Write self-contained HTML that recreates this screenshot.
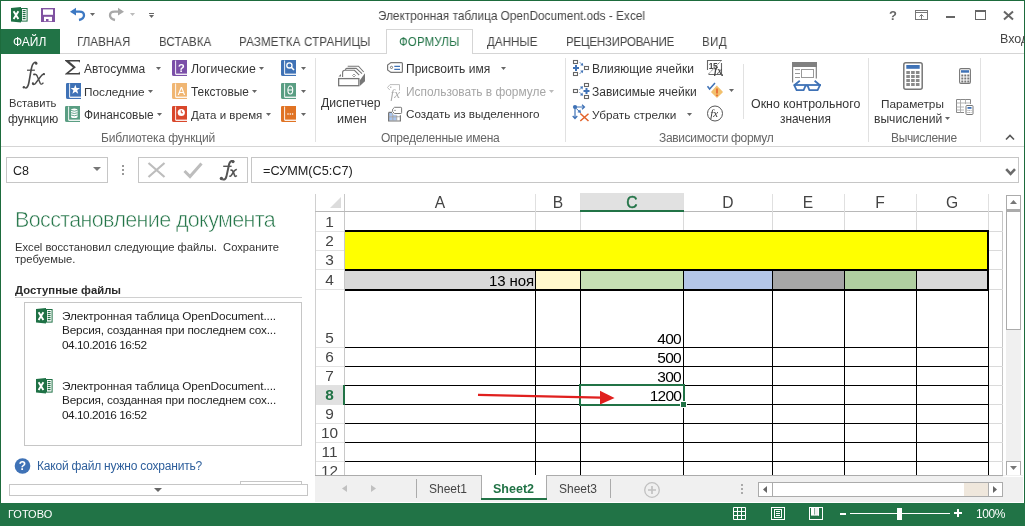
<!DOCTYPE html>
<html><head><meta charset="utf-8"><style>
html,body{margin:0;padding:0;}
body{width:1025px;height:526px;position:relative;overflow:hidden;background:#fff;font-family:"Liberation Sans",sans-serif;}
.t{position:absolute;white-space:nowrap;line-height:1;will-change:transform;}
.bm{display:inline-block;width:0;height:0;vertical-align:baseline;}
.r{position:absolute;box-sizing:border-box;}
svg.r{overflow:visible;will-change:transform}
</style></head><body>
<div class="r" style="left:0px;top:0px;width:1025px;height:1px;background:#1d6b3c"></div>
<div class="r" style="left:0px;top:0px;width:1px;height:526px;background:#1d6b3c"></div>
<div class="r" style="left:1024px;top:0px;width:1px;height:526px;background:#1d6b3c"></div>
<div class="t" id="k0" style="left:377.5px;top:9.40px;font-size:13px;color:#444;letter-spacing:0.05564741654829539px;transform:scaleX(0.9);transform-origin:0 0;"><span class="in">Электронная таблица OpenDocument.ods - Excel</span><i class="bm"></i></div>
<div class="t" id="k1" style="left:888.5px;top:8.71px;font-size:13px;color:#666;font-weight:700;"><span class="in">?</span><i class="bm"></i></div>
<div class="r" style="left:975px;top:10px;width:11px;height:10px;border:1px solid #666;border-top-width:2px"></div>
<div class="r" style="left:946px;top:16px;width:9px;height:2px;background:#666"></div>
<svg class="r" style="left:1003px;top:11px" width="11" height="9" viewBox="0 0 11 9"><path d="M1 0.5 L10 8.5 M10 0.5 L1 8.5" stroke="#666" stroke-width="2"/></svg>
<svg class="r" style="left:915px;top:10px" width="13" height="10" viewBox="0 0 13 10"><rect x="0.5" y="0.5" width="12" height="9" fill="none" stroke="#777"/><path d="M1 2.5 H12" stroke="#777"/><path d="M6.5 9 V4.5 M4.5 6.5 L6.5 4.5 L8.5 6.5" stroke="#777" fill="none"/></svg>
<div class="r" style="left:1px;top:29px;width:59px;height:25px;background:#217346"></div>
<div class="t" id="k2" style="left:13px;top:36.00px;font-size:12px;color:#fff;"><span class="in">ФАЙЛ</span><i class="bm"></i></div>
<div class="r" style="left:60px;top:53px;width:964px;height:1px;background:#d5d5d5"></div>
<div class="r" style="left:386px;top:29px;width:87px;height:25px;border:1px solid #d5d5d5;border-bottom:none;background:#fff"></div>
<div class="t" id="k3" style="left:76.5px;top:36.01px;font-size:12.8px;color:#444;letter-spacing:0.08928745814731798px;transform:scaleX(0.9);transform-origin:0 0;"><span class="in">ГЛАВНАЯ</span><i class="bm"></i></div>
<div class="t" id="k4" style="left:158.7px;top:36.01px;font-size:12.8px;color:#444;letter-spacing:0.11897452218191629px;transform:scaleX(0.9);transform-origin:0 0;"><span class="in">ВСТАВКА</span><i class="bm"></i></div>
<div class="t" id="k5" style="left:239.3px;top:36.01px;font-size:12.8px;color:#444;letter-spacing:0.21553129308363972px;transform:scaleX(0.9);transform-origin:0 0;"><span class="in">РАЗМЕТКА СТРАНИЦЫ</span><i class="bm"></i></div>
<div class="t" id="k6" style="left:399.2px;top:36.01px;font-size:12.8px;color:#217346;letter-spacing:0.13303222656249655px;transform:scaleX(0.9);transform-origin:0 0;"><span class="in">ФОРМУЛЫ</span><i class="bm"></i></div>
<div class="t" id="k7" style="left:486.9px;top:36.01px;font-size:12.8px;color:#444;letter-spacing:0.10989176432292092px;transform:scaleX(0.9);transform-origin:0 0;"><span class="in">ДАННЫЕ</span><i class="bm"></i></div>
<div class="t" id="k8" style="left:565.5px;top:36.01px;font-size:12.8px;color:#444;letter-spacing:-0.2202017647879464px;transform:scaleX(0.9);transform-origin:0 0;"><span class="in">РЕЦЕНЗИРОВАНИЕ</span><i class="bm"></i></div>
<div class="t" id="k9" style="left:702.4px;top:36.01px;font-size:12.8px;color:#444;letter-spacing:0.5682250976562538px;transform:scaleX(0.9);transform-origin:0 0;"><span class="in">ВИД</span><i class="bm"></i></div>
<div class="t" id="k10" style="left:999.7px;top:33.10px;font-size:12.5px;color:#444;"><span class="in">Вход</span><i class="bm"></i></div>
<div class="r" style="left:1px;top:146px;width:1023px;height:1px;background:#d5d5d5"></div>
<div class="r" style="left:315px;top:58px;width:1px;height:84px;background:#e1e1e1"></div>
<div class="r" style="left:565px;top:58px;width:1px;height:84px;background:#e1e1e1"></div>
<div class="r" style="left:868px;top:58px;width:1px;height:84px;background:#e1e1e1"></div>
<div class="r" style="left:980px;top:58px;width:1px;height:84px;background:#e1e1e1"></div>
<div class="r" style="left:743px;top:64px;width:1px;height:55px;background:#e1e1e1"></div>
<div class="t" id="k11" style="left:101px;top:131.50px;font-size:12px;color:#666;letter-spacing:-0.12708333333333052px;"><span class="in">Библиотека функций</span><i class="bm"></i></div>
<div class="t" id="k12" style="left:381px;top:131.50px;font-size:12px;color:#666;letter-spacing:-0.2326388888888889px;"><span class="in">Определенные имена</span><i class="bm"></i></div>
<div class="t" id="k13" style="left:659px;top:131.50px;font-size:12px;color:#666;letter-spacing:-0.3392361111111057px;"><span class="in">Зависимости формул</span><i class="bm"></i></div>
<div class="t" id="k14" style="left:891.2px;top:131.50px;font-size:12px;color:#666;letter-spacing:-0.3478125000000049px;"><span class="in">Вычисление</span><i class="bm"></i></div>
<div class="r" style="left:6px;top:157px;width:102px;height:26px;border:1px solid #c6c6c6"></div>
<div class="t" id="k15" style="left:13px;top:165.00px;font-size:12.5px;color:#222;"><span class="in">C8</span><i class="bm"></i></div>
<svg class="r" style="left:93px;top:167px" width="8" height="4" viewBox="0 0 8 4"><path d="M0 0 H8 L4 4 Z" fill="#777"/></svg>
<div class="r" style="left:122px;top:165px;width:2px;height:2px;background:#999"></div>
<div class="r" style="left:122px;top:169px;width:2px;height:2px;background:#999"></div>
<div class="r" style="left:122px;top:173px;width:2px;height:2px;background:#999"></div>
<div class="r" style="left:138px;top:157px;width:110px;height:26px;border:1px solid #c6c6c6"></div>
<div class="r" style="left:251px;top:157px;width:768px;height:26px;border:1px solid #c6c6c6"></div>
<div class="t" id="k16" style="left:263px;top:165.31px;font-size:12.7px;color:#222;"><span class="in">=СУММ(C5:C7)</span><i class="bm"></i></div>
<div class="t" id="k17" style="left:15px;top:209.81px;font-size:21.5px;color:#217346;letter-spacing:-0.63671875px;-webkit-text-stroke:0.55px #fff;"><span class="in">Восстановление документа</span><i class="bm"></i></div>
<div class="t" id="k18" style="left:15px;top:242.01px;font-size:11.2px;color:#333;"><span class="in">Excel восстановил следующие файлы.&nbsp; Сохраните</span><i class="bm"></i></div>
<div class="t" id="k19" style="left:15px;top:254.31px;font-size:11.2px;color:#333;"><span class="in">требуемые.</span><i class="bm"></i></div>
<div class="t" id="k20" style="left:15px;top:285.31px;font-size:11.3px;color:#2a2a2a;font-weight:700;"><span class="in">Доступные файлы</span><i class="bm"></i></div>
<div class="r" style="left:15px;top:297px;width:287px;height:1px;background:#d0d0d0"></div>
<div class="r" style="left:24px;top:302px;width:278px;height:144px;border:1px solid #c6c6c6"></div>
<div class="t" id="k21" style="left:62px;top:310.50px;font-size:11.8px;color:#1e1e1e;letter-spacing:-0.12413194444444445px;"><span class="in">Электронная таблица OpenDocument....</span><i class="bm"></i></div>
<div class="t" id="k22" style="left:62px;top:325.00px;font-size:11.8px;color:#1e1e1e;letter-spacing:-0.1875px;"><span class="in">Версия, созданная при последнем сох...</span><i class="bm"></i></div>
<div class="t" id="k23" style="left:62px;top:339.50px;font-size:11.8px;color:#1e1e1e;letter-spacing:-0.458984375px;"><span class="in">04.10.2016 16:52</span><i class="bm"></i></div>
<div class="t" id="k24" style="left:62px;top:380.50px;font-size:11.8px;color:#1e1e1e;letter-spacing:-0.12413194444444445px;"><span class="in">Электронная таблица OpenDocument....</span><i class="bm"></i></div>
<div class="t" id="k25" style="left:62px;top:395.00px;font-size:11.8px;color:#1e1e1e;letter-spacing:-0.1875px;"><span class="in">Версия, созданная при последнем сох...</span><i class="bm"></i></div>
<div class="t" id="k26" style="left:62px;top:409.50px;font-size:11.8px;color:#1e1e1e;letter-spacing:-0.458984375px;"><span class="in">04.10.2016 16:52</span><i class="bm"></i></div>
<div class="t" id="k27" style="left:37px;top:459.60px;font-size:12px;color:#2e5f9c;letter-spacing:-0.20543981481481483px;"><span class="in">Какой файл нужно сохранить?</span><i class="bm"></i></div>
<div class="r" style="left:240px;top:481px;width:62px;height:4px;border:1px solid #c6c6c6;border-bottom:none"></div>
<div class="r" style="left:9px;top:484px;width:299px;height:12px;border:1px solid #c6c6c6;background:#fff"></div>
<svg class="r" style="left:154px;top:488px" width="8" height="4" viewBox="0 0 8 4"><path d="M0 0 H8 L4 4 Z" fill="#666"/></svg>
<div class="r" style="left:0px;top:503px;width:1025px;height:23px;background:#217346"></div>
<div class="t" id="k28" style="left:8px;top:509.01px;font-size:11px;color:#fff;"><span class="in">ГОТОВО</span><i class="bm"></i></div>
<div class="t" id="k29" style="left:976px;top:508.20px;font-size:12px;color:#fff;letter-spacing:-0.42578125px;"><span class="in">100%</span><i class="bm"></i></div>
<div class="r" style="left:315px;top:194px;width:1px;height:281px;background:#d0d0d0"></div>
<div class="r" style="left:344px;top:194px;width:1px;height:281px;background:#c8c8c8"></div>
<div class="r" style="left:315px;top:211px;width:688px;height:1px;background:#b8b8b8"></div>
<div class="r" style="left:1002px;top:211px;width:1px;height:264px;background:#c6c6c6"></div>
<svg class="r" style="left:330px;top:197px" width="11" height="11" viewBox="0 0 11 11"><path d="M11 0 V11 H0 Z" fill="#dcdcdc"/></svg>
<div class="r" style="left:580px;top:193px;width:104px;height:17px;background:#e1e1e1"></div>
<div class="r" style="left:535px;top:194px;width:1px;height:17px;background:#e0e0e0"></div>
<div class="r" style="left:580px;top:194px;width:1px;height:17px;background:#e0e0e0"></div>
<div class="r" style="left:683px;top:194px;width:1px;height:17px;background:#e0e0e0"></div>
<div class="r" style="left:772px;top:194px;width:1px;height:17px;background:#e0e0e0"></div>
<div class="r" style="left:844px;top:194px;width:1px;height:17px;background:#e0e0e0"></div>
<div class="r" style="left:916px;top:194px;width:1px;height:17px;background:#e0e0e0"></div>
<div class="r" style="left:988px;top:194px;width:1px;height:17px;background:#e0e0e0"></div>
<div class="t" id="k30" style="left:419.5px;top:195.31px;font-size:15.6px;color:#444;width:40px;text-align:center;"><span class="in">A</span><i class="bm"></i></div>
<div class="t" id="k31" style="left:537.5px;top:195.31px;font-size:15.6px;color:#444;width:40px;text-align:center;"><span class="in">B</span><i class="bm"></i></div>
<div class="t" id="k32" style="left:611.5px;top:195.31px;font-size:15.6px;color:#217346;width:40px;text-align:center;-webkit-text-stroke:0.45px #217346;"><span class="in">C</span><i class="bm"></i></div>
<div class="t" id="k33" style="left:707.5px;top:195.31px;font-size:15.6px;color:#444;width:40px;text-align:center;"><span class="in">D</span><i class="bm"></i></div>
<div class="t" id="k34" style="left:788.0px;top:195.31px;font-size:15.6px;color:#444;width:40px;text-align:center;"><span class="in">E</span><i class="bm"></i></div>
<div class="t" id="k35" style="left:860.0px;top:195.31px;font-size:15.6px;color:#444;width:40px;text-align:center;"><span class="in">F</span><i class="bm"></i></div>
<div class="t" id="k36" style="left:932.0px;top:195.31px;font-size:15.6px;color:#444;width:40px;text-align:center;"><span class="in">G</span><i class="bm"></i></div>
<div class="r" style="left:535px;top:211px;width:1px;height:264px;background:#dadada"></div>
<div class="r" style="left:580px;top:211px;width:1px;height:264px;background:#dadada"></div>
<div class="r" style="left:683px;top:211px;width:1px;height:264px;background:#dadada"></div>
<div class="r" style="left:772px;top:211px;width:1px;height:264px;background:#dadada"></div>
<div class="r" style="left:844px;top:211px;width:1px;height:264px;background:#dadada"></div>
<div class="r" style="left:916px;top:211px;width:1px;height:264px;background:#dadada"></div>
<div class="r" style="left:988px;top:211px;width:1px;height:264px;background:#dadada"></div>
<div class="r" style="left:316px;top:231px;width:28px;height:1px;background:#e2e2e2"></div>
<div class="r" style="left:345px;top:231px;width:658px;height:1px;background:#dadada"></div>
<div class="r" style="left:316px;top:250px;width:28px;height:1px;background:#e2e2e2"></div>
<div class="r" style="left:345px;top:250px;width:658px;height:1px;background:#dadada"></div>
<div class="r" style="left:316px;top:269px;width:28px;height:1px;background:#e2e2e2"></div>
<div class="r" style="left:345px;top:269px;width:658px;height:1px;background:#dadada"></div>
<div class="r" style="left:316px;top:289px;width:28px;height:1px;background:#e2e2e2"></div>
<div class="r" style="left:345px;top:289px;width:658px;height:1px;background:#dadada"></div>
<div class="r" style="left:316px;top:347px;width:28px;height:1px;background:#e2e2e2"></div>
<div class="r" style="left:345px;top:347px;width:658px;height:1px;background:#dadada"></div>
<div class="r" style="left:316px;top:366px;width:28px;height:1px;background:#e2e2e2"></div>
<div class="r" style="left:345px;top:366px;width:658px;height:1px;background:#dadada"></div>
<div class="r" style="left:316px;top:385px;width:28px;height:1px;background:#e2e2e2"></div>
<div class="r" style="left:345px;top:385px;width:658px;height:1px;background:#dadada"></div>
<div class="r" style="left:316px;top:404px;width:28px;height:1px;background:#e2e2e2"></div>
<div class="r" style="left:345px;top:404px;width:658px;height:1px;background:#dadada"></div>
<div class="r" style="left:316px;top:423px;width:28px;height:1px;background:#e2e2e2"></div>
<div class="r" style="left:345px;top:423px;width:658px;height:1px;background:#dadada"></div>
<div class="r" style="left:316px;top:442px;width:28px;height:1px;background:#e2e2e2"></div>
<div class="r" style="left:345px;top:442px;width:658px;height:1px;background:#dadada"></div>
<div class="r" style="left:316px;top:461px;width:28px;height:1px;background:#e2e2e2"></div>
<div class="r" style="left:345px;top:461px;width:658px;height:1px;background:#dadada"></div>
<div class="r" style="left:316px;top:386px;width:27px;height:18px;background:#e1e1e1"></div>
<div class="t" id="k37" style="left:315px;top:213.60px;font-size:15.4px;color:#444;width:29px;text-align:center;"><span class="in">1</span><i class="bm"></i></div>
<div class="t" id="k38" style="left:315px;top:232.60px;font-size:15.4px;color:#444;width:29px;text-align:center;"><span class="in">2</span><i class="bm"></i></div>
<div class="t" id="k39" style="left:315px;top:251.60px;font-size:15.4px;color:#444;width:29px;text-align:center;"><span class="in">3</span><i class="bm"></i></div>
<div class="t" id="k40" style="left:315px;top:271.60px;font-size:15.4px;color:#444;width:29px;text-align:center;"><span class="in">4</span><i class="bm"></i></div>
<div class="t" id="k41" style="left:315px;top:329.60px;font-size:15.4px;color:#444;width:29px;text-align:center;"><span class="in">5</span><i class="bm"></i></div>
<div class="t" id="k42" style="left:315px;top:348.60px;font-size:15.4px;color:#444;width:29px;text-align:center;"><span class="in">6</span><i class="bm"></i></div>
<div class="t" id="k43" style="left:315px;top:367.60px;font-size:15.4px;color:#444;width:29px;text-align:center;"><span class="in">7</span><i class="bm"></i></div>
<div class="t" id="k44" style="left:315px;top:386.60px;font-size:15.4px;color:#217346;font-weight:700;width:29px;text-align:center;"><span class="in">8</span><i class="bm"></i></div>
<div class="t" id="k45" style="left:315px;top:405.60px;font-size:15.4px;color:#444;width:29px;text-align:center;"><span class="in">9</span><i class="bm"></i></div>
<div class="t" id="k46" style="left:315px;top:424.60px;font-size:15.4px;color:#444;width:29px;text-align:center;"><span class="in">10</span><i class="bm"></i></div>
<div class="t" id="k47" style="left:315px;top:443.60px;font-size:15.4px;color:#444;width:29px;text-align:center;"><span class="in">11</span><i class="bm"></i></div>
<div class="t" id="k48" style="left:315px;top:462.60px;font-size:15.4px;color:#444;width:29px;text-align:center;"><span class="in">12</span><i class="bm"></i></div>
<div class="r" style="left:345px;top:232px;width:643px;height:37px;background:#ffff00"></div>
<div class="r" style="left:345px;top:271px;width:190px;height:18px;background:#d9d9d9"></div>
<div class="r" style="left:536px;top:271px;width:44px;height:18px;background:#fff8cc"></div>
<div class="r" style="left:581px;top:271px;width:102px;height:18px;background:#c6e0b4"></div>
<div class="r" style="left:684px;top:271px;width:88px;height:18px;background:#b4c6e7"></div>
<div class="r" style="left:773px;top:271px;width:71px;height:18px;background:#a6a6a6"></div>
<div class="r" style="left:845px;top:271px;width:71px;height:18px;background:#b0cfa0"></div>
<div class="r" style="left:917px;top:271px;width:71px;height:18px;background:#d9d9d9"></div>
<div class="r" style="left:345px;top:230px;width:644px;height:2px;background:#000"></div>
<div class="r" style="left:345px;top:269px;width:644px;height:2px;background:#000"></div>
<div class="r" style="left:345px;top:289px;width:644px;height:2px;background:#000"></div>
<div class="r" style="left:987px;top:230px;width:2px;height:61px;background:#000"></div>
<div class="r" style="left:535px;top:271px;width:1px;height:18px;background:#000"></div>
<div class="r" style="left:580px;top:271px;width:1px;height:18px;background:#000"></div>
<div class="r" style="left:683px;top:271px;width:1px;height:18px;background:#000"></div>
<div class="r" style="left:772px;top:271px;width:1px;height:18px;background:#000"></div>
<div class="r" style="left:844px;top:271px;width:1px;height:18px;background:#000"></div>
<div class="r" style="left:916px;top:271px;width:1px;height:18px;background:#000"></div>
<div class="r" style="left:345px;top:347px;width:644px;height:1px;background:#000"></div>
<div class="r" style="left:345px;top:366px;width:644px;height:1px;background:#000"></div>
<div class="r" style="left:345px;top:385px;width:644px;height:1px;background:#000"></div>
<div class="r" style="left:345px;top:404px;width:644px;height:1px;background:#000"></div>
<div class="r" style="left:345px;top:423px;width:644px;height:1px;background:#000"></div>
<div class="r" style="left:345px;top:442px;width:644px;height:1px;background:#000"></div>
<div class="r" style="left:345px;top:461px;width:644px;height:1px;background:#000"></div>
<div class="r" style="left:535px;top:291px;width:1px;height:184px;background:#000"></div>
<div class="r" style="left:580px;top:291px;width:1px;height:184px;background:#000"></div>
<div class="r" style="left:683px;top:291px;width:1px;height:184px;background:#000"></div>
<div class="r" style="left:772px;top:291px;width:1px;height:184px;background:#000"></div>
<div class="r" style="left:844px;top:291px;width:1px;height:184px;background:#000"></div>
<div class="r" style="left:916px;top:291px;width:1px;height:184px;background:#000"></div>
<div class="r" style="left:988px;top:291px;width:1px;height:184px;background:#000"></div>
<div class="t" id="k49" style="left:640px;top:331.01px;font-size:15.5px;color:#000;letter-spacing:-0.6906249999999955px;width:41px;text-align:right;"><span class="in">400</span><i class="bm"></i></div>
<div class="t" id="k50" style="left:640px;top:350.01px;font-size:15.5px;color:#000;letter-spacing:-0.6906249999999955px;width:41px;text-align:right;"><span class="in">500</span><i class="bm"></i></div>
<div class="t" id="k51" style="left:640px;top:369.01px;font-size:15.5px;color:#000;letter-spacing:-0.6906249999999955px;width:41px;text-align:right;"><span class="in">300</span><i class="bm"></i></div>
<div class="t" id="k52" style="left:640px;top:388.01px;font-size:15.5px;color:#000;letter-spacing:-0.821875000000003px;width:41px;text-align:right;"><span class="in">1200</span><i class="bm"></i></div>
<div class="r" style="left:580px;top:210px;width:104px;height:2px;background:#217346"></div>
<div class="r" style="left:343px;top:385px;width:2px;height:20px;background:#217346"></div>
<div class="r" style="left:579px;top:384px;width:106px;height:22px;border:2px solid #217346"></div>
<div class="r" style="left:680px;top:401px;width:7px;height:7px;background:#217346;border:1px solid #fff"></div>
<svg class="r" style="left:470px;top:385px" width="150" height="25" viewBox="0 0 150 25"><path d="M8 9.9 L131 12.6" stroke="#e0201e" stroke-width="2.2"/><path d="M130 5.8 L144.6 12.9 L130 19.5 Z" fill="#e0201e"/></svg>
<div class="r" style="left:1003px;top:194px;width:21px;height:309px;background:#fff"></div>
<div class="r" style="left:1006px;top:211px;width:15px;height:290px;background:#f0f0f0"></div>
<div class="r" style="left:1006px;top:195px;width:15px;height:15px;border:1px solid #ababab;background:#fff"></div>
<svg class="r" style="left:1010px;top:200px" width="7" height="4" viewBox="0 0 7 4"><path d="M0 4 H7 L3.5 0 Z" fill="#777"/></svg>
<div class="r" style="left:1006px;top:210px;width:15px;height:120px;border:1px solid #ababab;background:#fff;border-top-width:2px"></div>
<div class="r" style="left:1006px;top:461px;width:15px;height:15px;border:1px solid #ababab;background:#fff"></div>
<svg class="r" style="left:1010px;top:466px" width="7" height="4" viewBox="0 0 7 4"><path d="M0 0 H7 L3.5 4 Z" fill="#777"/></svg>
<div class="r" style="left:315px;top:475px;width:708px;height:27px;background:#f0f0f0"></div>
<div class="r" style="left:315px;top:475px;width:688px;height:1px;background:#ababab"></div>
<div class="r" style="left:1003px;top:476px;width:20px;height:1px;background:#fff"></div>
<svg class="r" style="left:342px;top:485px" width="5" height="7" viewBox="0 0 5 7"><path d="M5 0 V7 L0 3.5 Z" fill="#c0c0c0"/></svg>
<svg class="r" style="left:371px;top:485px" width="5" height="7" viewBox="0 0 5 7"><path d="M0 0 V7 L5 3.5 Z" fill="#c0c0c0"/></svg>
<div class="r" style="left:416px;top:479px;width:1px;height:19px;background:#ababab"></div>
<div class="r" style="left:481px;top:475px;width:66px;height:25px;background:#fff;border:1px solid #ababab;border-top:none"></div>
<div class="r" style="left:481px;top:498px;width:66px;height:2px;background:#217346"></div>
<div class="t" id="k53" style="left:429.2px;top:482.81px;font-size:12px;color:#444;"><span class="in">Sheet1</span><i class="bm"></i></div>
<div class="t" id="k54" style="left:493.2px;top:482.50px;font-size:12.5px;color:#217346;font-weight:700;"><span class="in">Sheet2</span><i class="bm"></i></div>
<div class="t" id="k55" style="left:559px;top:482.81px;font-size:12px;color:#444;"><span class="in">Sheet3</span><i class="bm"></i></div>
<div class="r" style="left:610px;top:479px;width:1px;height:19px;background:#ababab"></div>
<svg class="r" style="left:644px;top:482px" width="16" height="16" viewBox="0 0 16 16"><circle cx="8" cy="8" r="7.3" fill="none" stroke="#c0c0c0" stroke-width="1.3"/><path d="M8 4 V12 M4 8 H12" stroke="#c0c0c0" stroke-width="1.6"/></svg>
<div class="r" style="left:741px;top:484px;width:2px;height:2px;background:#aaa"></div>
<div class="r" style="left:741px;top:488px;width:2px;height:2px;background:#aaa"></div>
<div class="r" style="left:741px;top:492px;width:2px;height:2px;background:#aaa"></div>
<div class="r" style="left:758px;top:482px;width:245px;height:15px;border:1px solid #ababab;background:#fff"></div>
<div class="r" style="left:964px;top:483px;width:24px;height:13px;background:#efe7dc"></div>
<div class="r" style="left:772px;top:483px;width:1px;height:13px;background:#ababab"></div>
<div class="r" style="left:988px;top:482px;width:15px;height:15px;border:1px solid #ababab;background:#fff"></div>
<svg class="r" style="left:763px;top:486px" width="4" height="7" viewBox="0 0 4 7"><path d="M4 0 V7 L0 3.5 Z" fill="#666"/></svg>
<svg class="r" style="left:993px;top:486px" width="4" height="7" viewBox="0 0 4 7"><path d="M0 0 V7 L4 3.5 Z" fill="#666"/></svg>
<div class="r" style="left:315px;top:502px;width:709px;height:1px;background:#fff"></div>
<svg class="r" style="left:18px;top:58px" width="32" height="34" viewBox="0 0 32 34"><path d="M18.6 5.2 Q18 3.9 16.6 4.4 Q14.2 5.3 13.2 11.5 L10.9 24.5 Q9.9 30.3 7.2 29.9" fill="none" stroke="#4a4a4a" stroke-width="1.6"/><circle cx="18.2" cy="5.6" r="1.25" fill="#4a4a4a"/><circle cx="5.9" cy="29.2" r="1.25" fill="#4a4a4a"/><path d="M9 12.2 H16.9" stroke="#4a4a4a" stroke-width="1.2"/><path d="M15.8 16.6 Q18.4 15.4 19.6 19 L22.2 25.2 Q23.3 27.4 25.4 24.6" fill="none" stroke="#4a4a4a" stroke-width="1.4"/><path d="M26.4 16.4 Q25.1 15.3 22.9 18.3 L17.6 25.2 Q15.8 27.3 14.6 25.8" fill="none" stroke="#4a4a4a" stroke-width="1.4"/><circle cx="16" cy="16.4" r="0.9" fill="#4a4a4a"/><circle cx="25.9" cy="16.2" r="1.1" fill="#4a4a4a"/><circle cx="14.9" cy="25.4" r="1.1" fill="#4a4a4a"/></svg>
<div class="t" id="k56" style="left:9.4px;top:98.01px;font-size:11.2px;color:#363636;"><span class="in">Вставить</span><i class="bm"></i></div>
<div class="t" id="k57" style="left:8px;top:113.00px;font-size:12px;color:#363636;"><span class="in">функцию</span><i class="bm"></i></div>
<svg class="r" style="left:64px;top:59px" width="17" height="17" viewBox="0 0 17 17"><path d="M1 1 H16 V3.9 Q15.7 2.6 14 2.6 H5.4 L11.9 8.3 L4.8 14 H14 Q15.7 14 16 12.6 V15.6 H1 V14.9 L8.9 8.5 L1 1.7 Z" fill="#444"/></svg>
<div class="t" id="k58" style="left:84.4px;top:62.70px;font-size:12px;color:#363636;"><span class="in">Автосумма</span><i class="bm"></i></div>
<svg class="r" style="left:155.7px;top:66.8px" width="5" height="3" viewBox="0 0 5 3"><path d="M0 0 H5 L2.5 3 Z" fill="#666"/></svg>
<svg class="r" style="left:66px;top:83px" width="15" height="16" viewBox="0 0 15 16"><path d="M1.2 0 H15 V14.2 H3.6 V15 H15 V16 H1.8 Q0 16 0 14.5 V1.2 Q0 0 1.2 0 Z" fill="#3f72b6"/><path d="M3.6 0.5 V14" stroke="#fff" stroke-width="0.9"/><path d="M3.6 14.1 H15" stroke="#fff" stroke-width="0.9"/><path d="M9.3 1.8 L10.5 5.1 L14 5.1 L11.2 7.3 L12.2 10.7 L9.3 8.7 L6.4 10.7 L7.4 7.3 L4.6 5.1 L8.1 5.1 Z" fill="#fff"/></svg>
<div class="t" id="k59" style="left:84.4px;top:86.60px;font-size:11.8px;color:#363636;"><span class="in">Последние</span><i class="bm"></i></div>
<svg class="r" style="left:148px;top:89.8px" width="5" height="3" viewBox="0 0 5 3"><path d="M0 0 H5 L2.5 3 Z" fill="#666"/></svg>
<svg class="r" style="left:65.2px;top:106px" width="15" height="16" viewBox="0 0 15 16"><path d="M1.2 0 H15 V14.2 H3.6 V15 H15 V16 H1.8 Q0 16 0 14.5 V1.2 Q0 0 1.2 0 Z" fill="#5a9e83"/><path d="M3.6 0.5 V14" stroke="#fff" stroke-width="0.9"/><path d="M3.6 14.1 H15" stroke="#fff" stroke-width="0.9"/><path d="M6 4.2 Q6 2.6 9.3 2.6 Q12.6 2.6 12.6 4.2 V10.4 Q12.6 12 9.3 12 Q6 12 6 10.4 Z" fill="#fff"/><path d="M6 4.4 Q9.3 6 12.6 4.4 M6 6.7 Q9.3 8.3 12.6 6.7 M6 9 Q9.3 10.6 12.6 9" fill="none" stroke="#5a9e83" stroke-width="0.9"/></svg>
<div class="t" id="k60" style="left:84.4px;top:109.61px;font-size:11.9px;color:#363636;"><span class="in">Финансовые</span><i class="bm"></i></div>
<svg class="r" style="left:157px;top:112.8px" width="5" height="3" viewBox="0 0 5 3"><path d="M0 0 H5 L2.5 3 Z" fill="#666"/></svg>
<svg class="r" style="left:172px;top:60px" width="15" height="16" viewBox="0 0 15 16"><path d="M1.2 0 H15 V14.2 H3.6 V15 H15 V16 H1.8 Q0 16 0 14.5 V1.2 Q0 0 1.2 0 Z" fill="#7b4fa8"/><path d="M3.6 0.5 V14" stroke="#fff" stroke-width="0.9"/><path d="M3.6 14.1 H15" stroke="#fff" stroke-width="0.9"/><text x="9.3" y="11.5" text-anchor="middle" font-family="Liberation Sans" font-weight="700" font-size="11" fill="#fff">?</text></svg>
<div class="t" id="k61" style="left:191.2px;top:62.71px;font-size:12.3px;color:#363636;"><span class="in">Логические</span><i class="bm"></i></div>
<svg class="r" style="left:259px;top:66.8px" width="5" height="3" viewBox="0 0 5 3"><path d="M0 0 H5 L2.5 3 Z" fill="#666"/></svg>
<svg class="r" style="left:172px;top:83px" width="15" height="16" viewBox="0 0 15 16"><path d="M1.2 0 H15 V14.2 H3.6 V15 H15 V16 H1.8 Q0 16 0 14.5 V1.2 Q0 0 1.2 0 Z" fill="#f0b673"/><path d="M3.6 0.5 V14" stroke="#fff" stroke-width="0.9"/><path d="M3.6 14.1 H15" stroke="#fff" stroke-width="0.9"/><text x="9.3" y="12" text-anchor="middle" font-family="Liberation Sans" font-size="11" fill="#fff">A</text></svg>
<div class="t" id="k62" style="left:191.2px;top:86.61px;font-size:11.9px;color:#363636;"><span class="in">Текстовые</span><i class="bm"></i></div>
<svg class="r" style="left:252.3px;top:89.8px" width="5" height="3" viewBox="0 0 5 3"><path d="M0 0 H5 L2.5 3 Z" fill="#666"/></svg>
<svg class="r" style="left:172px;top:106px" width="15" height="16" viewBox="0 0 15 16"><path d="M1.2 0 H15 V14.2 H3.6 V15 H15 V16 H1.8 Q0 16 0 14.5 V1.2 Q0 0 1.2 0 Z" fill="#d9472b"/><path d="M3.6 0.5 V14" stroke="#fff" stroke-width="0.9"/><path d="M3.6 14.1 H15" stroke="#fff" stroke-width="0.9"/><circle cx="9.3" cy="6.5" r="3.6" fill="#fff"/><path d="M9.3 4.3 V6.8 H11" stroke="#d9472b" stroke-width="1" fill="none"/></svg>
<div class="t" id="k63" style="left:191.2px;top:109.60px;font-size:11.5px;color:#363636;"><span class="in">Дата и время</span><i class="bm"></i></div>
<svg class="r" style="left:266px;top:112.8px" width="5" height="3" viewBox="0 0 5 3"><path d="M0 0 H5 L2.5 3 Z" fill="#666"/></svg>
<svg class="r" style="left:281px;top:60px" width="15" height="16" viewBox="0 0 15 16"><path d="M1.2 0 H15 V14.2 H3.6 V15 H15 V16 H1.8 Q0 16 0 14.5 V1.2 Q0 0 1.2 0 Z" fill="#3f72b6"/><path d="M3.6 0.5 V14" stroke="#fff" stroke-width="0.9"/><path d="M3.6 14.1 H15" stroke="#fff" stroke-width="0.9"/><circle cx="8.4" cy="5.4" r="2.6" fill="none" stroke="#fff" stroke-width="1.3"/><path d="M10.3 7.3 L13 10" stroke="#fff" stroke-width="1.6"/></svg>
<svg class="r" style="left:301px;top:66.8px" width="5" height="3" viewBox="0 0 5 3"><path d="M0 0 H5 L2.5 3 Z" fill="#666"/></svg>
<svg class="r" style="left:281px;top:83px" width="15" height="16" viewBox="0 0 15 16"><path d="M1.2 0 H15 V14.2 H3.6 V15 H15 V16 H1.8 Q0 16 0 14.5 V1.2 Q0 0 1.2 0 Z" fill="#5a9e83"/><path d="M3.6 0.5 V14" stroke="#fff" stroke-width="0.9"/><path d="M3.6 14.1 H15" stroke="#fff" stroke-width="0.9"/><ellipse cx="9.3" cy="7" rx="2.4" ry="4" fill="none" stroke="#fff" stroke-width="1.1"/><path d="M7 7 H11.6" stroke="#fff" stroke-width="1"/></svg>
<svg class="r" style="left:301px;top:89.8px" width="5" height="3" viewBox="0 0 5 3"><path d="M0 0 H5 L2.5 3 Z" fill="#666"/></svg>
<svg class="r" style="left:281px;top:106px" width="15" height="16" viewBox="0 0 15 16"><path d="M1.2 0 H15 V14.2 H3.6 V15 H15 V16 H1.8 Q0 16 0 14.5 V1.2 Q0 0 1.2 0 Z" fill="#e07324"/><path d="M3.6 0.5 V14" stroke="#fff" stroke-width="0.9"/><path d="M3.6 14.1 H15" stroke="#fff" stroke-width="0.9"/><circle cx="7" cy="8" r="0.8" fill="#fff"/><circle cx="9.3" cy="8" r="0.8" fill="#fff"/><circle cx="11.6" cy="8" r="0.8" fill="#fff"/></svg>
<svg class="r" style="left:301px;top:112.8px" width="5" height="3" viewBox="0 0 5 3"><path d="M0 0 H5 L2.5 3 Z" fill="#666"/></svg>
<svg class="r" style="left:337px;top:64px" width="29" height="23" viewBox="0 0 29 23"><path d="M10.7 2.2 H21.5 L26.7 8" fill="none" stroke="#777" stroke-width="1.1"/>
<path d="M8.6 6 V5.6 Q8.6 4.4 9.8 4.4 H19.2 L25 9.7" fill="none" stroke="#777" stroke-width="1.1"/>
<path d="M5.6 13 V8.6 Q5.6 6.3 7.9 6.3 H17.5 L22.2 11.2" fill="none" stroke="#777" stroke-width="1.1"/>
<path d="M17 10 L18.5 11.5 L17 13 L15.5 11.5 Z" fill="none" stroke="#888" stroke-width="0.8"/>
<path d="M1.5 12.6 L4 10 V12.6 Z" fill="#777"/>
<rect x="1.65" y="14.6" width="20.2" height="7.1" fill="#fff" stroke="#777" stroke-width="1.3"/>
<path d="M22.8 16.2 L28 9.2 V17.2 L22.8 22 Z" fill="#777"/></svg>
<div class="t" id="k64" style="left:321.4px;top:97.00px;font-size:12.2px;color:#363636;"><span class="in">Диспетчер</span><i class="bm"></i></div>
<div class="t" id="k65" style="left:336.6px;top:113.01px;font-size:12.6px;color:#363636;"><span class="in">имен</span><i class="bm"></i></div>
<svg class="r" style="left:387px;top:62px" width="16" height="11" viewBox="0 0 16 11"><path d="M4 0.6 H14.4 Q15.4 0.6 15.4 1.6 V9.4 Q15.4 10.4 14.4 10.4 H4 L0.6 8 V3 Z" fill="#fff" stroke="#777" stroke-width="1.2"/><circle cx="4.5" cy="5.4" r="1.1" fill="none" stroke="#777" stroke-width="1"/><path d="M7.3 4.4 H13 M7.3 7.4 H13" stroke="#3f72b6" stroke-width="1.2"/></svg>
<div class="t" id="k66" style="left:406.4px;top:63.31px;font-size:12px;color:#363636;"><span class="in">Присвоить имя</span><i class="bm"></i></div>
<svg class="r" style="left:500.8px;top:67.3px" width="5" height="3" viewBox="0 0 5 3"><path d="M0 0 H5 L2.5 3 Z" fill="#666"/></svg>
<svg class="r" style="left:387px;top:84px" width="17" height="16" viewBox="0 0 17 16"><path d="M12.5 6.5 V0.6 H3 L0.5 3.5 L2.8 6" fill="none" stroke="#bdbdbd" stroke-width="1"/><rect x="3" y="2.5" width="1.4" height="1.4" fill="#bbb"/><text x="3.6" y="13.6" font-family="Liberation Serif" font-style="italic" font-size="13" fill="#aaa">fx</text></svg>
<div class="t" id="k67" style="left:406.4px;top:87.01px;font-size:11.9px;color:#a6a6a6;"><span class="in">Использовать в формуле</span><i class="bm"></i></div>
<svg class="r" style="left:549px;top:90.3px" width="5" height="3" viewBox="0 0 5 3"><path d="M0 0 H5 L2.5 3 Z" fill="#bbb"/></svg>
<svg class="r" style="left:388px;top:106px" width="15" height="16" viewBox="0 0 15 16"><rect x="1" y="7" width="3.5" height="3.5" fill="#a9c4ec"/><rect x="1" y="11" width="3.5" height="3.5" fill="#a9c4ec"/><rect x="5" y="11" width="3.5" height="3.5" fill="#a9c4ec"/><rect x="5" y="8.8" width="3.5" height="1.7" fill="#a9c4ec"/><path d="M0.6 6.4 V15 H12.4 V9.3 M0.6 6.4 H4" fill="none" stroke="#777" stroke-width="1.2"/><path d="M4.75 7 V14.5 M8.75 9.5 V14.5 M1 10.75 H12" stroke="#999" stroke-width="0.8"/><path d="M6.5 1.3 H12.8 Q13.6 1.3 13.6 2.1 V6.7 Q13.6 7.5 12.8 7.5 H6.5 L4.6 5.6 V3.2 Z" fill="#fff" stroke="#777" stroke-width="1"/><circle cx="7" cy="4.4" r="0.7" fill="#777"/></svg>
<div class="t" id="k68" style="left:406.4px;top:108.41px;font-size:11.7px;color:#363636;"><span class="in">Создать из выделенного</span><i class="bm"></i></div>
<svg class="r" style="left:573px;top:60px" width="17" height="16" viewBox="0 0 17 16"><rect x="0.5" y="0.5" width="4" height="3" fill="#fff" stroke="#666" stroke-width="1.1"/><rect x="0.5" y="12.5" width="4" height="3" fill="#fff" stroke="#666" stroke-width="1.1"/><rect x="11.5" y="6.5" width="4" height="3" fill="#fff" stroke="#666" stroke-width="1.1"/><path d="M0 8 H6 M3 5 V11" stroke="#3f72b6" stroke-width="2"/><path d="M6.5 2 L8.46 3.96" stroke="#3f72b6" stroke-width="1" stroke-dasharray="1 0.7"/><path d="M10.3 5.8 L7.19 5.23 L9.73 2.69 Z" fill="#3f72b6"/><path d="M6.5 14 L8.46 12.04" stroke="#3f72b6" stroke-width="1" stroke-dasharray="1 0.7"/><path d="M10.3 10.2 L9.73 13.31 L7.19 10.77 Z" fill="#3f72b6"/></svg>
<div class="t" id="k69" style="left:592.4px;top:63.00px;font-size:12px;color:#363636;"><span class="in">Влияющие ячейки</span><i class="bm"></i></div>
<svg class="r" style="left:573px;top:83px" width="17" height="16" viewBox="0 0 17 16"><rect x="0.5" y="6.5" width="4" height="3" fill="#fff" stroke="#666" stroke-width="1.1"/><rect x="11.5" y="0.5" width="4" height="3" fill="#fff" stroke="#666" stroke-width="1.1"/><rect x="11.5" y="12.5" width="4" height="3" fill="#fff" stroke="#666" stroke-width="1.1"/><path d="M10.5 8 H16.5 M13.5 5 V11" stroke="#3f72b6" stroke-width="2"/><path d="M6.3 7 L8.16 5.14" stroke="#3f72b6" stroke-width="1" stroke-dasharray="1 0.7"/><path d="M10 3.3 L9.43 6.41 L6.89 3.87 Z" fill="#3f72b6"/><path d="M6.3 9 L8.16 10.86" stroke="#3f72b6" stroke-width="1" stroke-dasharray="1 0.7"/><path d="M10 12.7 L6.89 12.13 L9.43 9.59 Z" fill="#3f72b6"/></svg>
<div class="t" id="k70" style="left:592.4px;top:85.60px;font-size:12px;color:#363636;"><span class="in">Зависимые ячейки</span><i class="bm"></i></div>
<svg class="r" style="left:573px;top:105px" width="17" height="17" viewBox="0 0 17 17"><circle cx="2" cy="2" r="2.1" fill="#3f72b6"/><path d="M2 2 V13.5 M-0.3 11 L2 13.5 L4.3 11 M2 2 H11.5 M9 -0.3 L11.5 2 L9 4.3" stroke="#3f72b6" stroke-width="1.2" fill="none"/><path d="M3.2 3.5 L6.5 6.5" stroke="#3f72b6" stroke-width="1"/><path d="M8 8 L4.4 7.3 L7.3 4.4 Z" fill="#3f72b6"/><path d="M7.3 8.5 L15.5 16 M15.5 8.8 L7.3 16" stroke="#e2622a" stroke-width="1.5"/></svg>
<div class="t" id="k71" style="left:592.4px;top:109.50px;font-size:11.8px;color:#363636;"><span class="in">Убрать стрелки</span><i class="bm"></i></div>
<svg class="r" style="left:687px;top:112.8px" width="5" height="3" viewBox="0 0 5 3"><path d="M0 0 H5 L2.5 3 Z" fill="#666"/></svg>
<svg class="r" style="left:707px;top:60px" width="16" height="16" viewBox="0 0 16 16"><path d="M0.5 10 V0.5 H14.5 M14.5 3 V14.5 H1.5" fill="none" stroke="#666" stroke-width="1.1"/><path d="M1.5 14 L14.5 0.5" stroke="#666" stroke-width="1" stroke-dasharray="1.2 0.8"/><text x="1.8" y="8.6" font-family="Liberation Sans" font-weight="700" font-size="8.5" letter-spacing="-0.6" fill="#444">15</text><text x="7" y="14" font-family="Liberation Serif" font-style="italic" font-weight="700" font-size="9.5" fill="#444">fx</text><rect x="14.3" y="14.3" width="1.7" height="1.7" fill="#555"/></svg>
<svg class="r" style="left:707px;top:82px" width="18" height="17" viewBox="0 0 18 17"><path d="M10 3.8 L15.6 9.5 Q16.2 10 15.6 10.5 L10.5 15.6 Q10 16.2 9.5 15.6 L4.4 10.5 Q3.8 10 4.4 9.5 L9.5 3.8 Q10 3.2 10.5 3.8 Z" fill="#f2c06d"/><path d="M0.5 4.3 L2.6 7 L8 1" stroke="#3f72b6" stroke-width="1.5" fill="none"/><path d="M10 6.5 V11.5" stroke="#e8602a" stroke-width="1.6"/><rect x="9.2" y="12.6" width="1.6" height="1.6" fill="#e8602a"/></svg>
<svg class="r" style="left:729px;top:89.4px" width="5" height="3" viewBox="0 0 5 3"><path d="M0 0 H5 L2.5 3 Z" fill="#666"/></svg>
<svg class="r" style="left:707px;top:105px" width="17" height="17" viewBox="0 0 17 17"><circle cx="8" cy="8.5" r="7.5" fill="#fff" stroke="#555" stroke-width="1"/><text x="3.2" y="12.2" font-family="Liberation Serif" font-style="italic" font-size="11" fill="#333">fx</text></svg>
<svg class="r" style="left:792px;top:62px" width="30" height="30" viewBox="0 0 30 30"><rect x="0" y="0" width="25" height="5" fill="#808080"/>
<path d="M0.6 5 V20.5 M24.3 5 V16.5" stroke="#808080" stroke-width="1.2"/>
<path d="M3 7.6 H8 M3 11.5 H8 M3 15.5 H8" stroke="#999" stroke-width="1"/>
<rect x="9.5" y="7.5" width="12" height="8" fill="none" stroke="#999" stroke-width="1"/>
<path d="M7.8 18.8 L2.2 23.2 L4.6 28.2 H11.6 L13.6 23.6 H15.6 L17.4 28.2 H25.6 L28 23.2 L22.6 18.8" fill="none" stroke="#3f72b6" stroke-width="1.8" stroke-linejoin="round"/>
<path d="M1.8 23 H29" stroke="#3f72b6" stroke-width="1.8"/></svg>
<div class="t" id="k72" style="left:750.6px;top:97.81px;font-size:12.4px;color:#363636;"><span class="in">Окно контрольного</span><i class="bm"></i></div>
<div class="t" id="k73" style="left:779.5px;top:114.01px;font-size:11.9px;color:#363636;"><span class="in">значения</span><i class="bm"></i></div>
<svg class="r" style="left:903px;top:62px" width="20" height="28" viewBox="0 0 20 28"><rect x="0.8" y="0.8" width="18.4" height="26.4" rx="2" fill="#fff" stroke="#777" stroke-width="1.5"/><rect x="3.3" y="3" width="13.4" height="3.8" fill="#3f72b6"/><rect x="3.3" y="9" width="3.6" height="3" fill="#8a8a8a"/><rect x="8.1" y="9" width="3.6" height="3" fill="#8a8a8a"/><rect x="12.899999999999999" y="9" width="3.6" height="3" fill="#8a8a8a"/><rect x="3.3" y="13" width="3.6" height="3" fill="#8a8a8a"/><rect x="8.1" y="13" width="3.6" height="3" fill="#8a8a8a"/><rect x="12.899999999999999" y="13" width="3.6" height="3" fill="#8a8a8a"/><rect x="3.3" y="17" width="3.6" height="3" fill="#8a8a8a"/><rect x="8.1" y="17" width="3.6" height="3" fill="#8a8a8a"/><rect x="12.899999999999999" y="17" width="3.6" height="3" fill="#8a8a8a"/><rect x="3.3" y="21" width="3.6" height="3" fill="#8a8a8a"/><rect x="8.1" y="21" width="3.6" height="3" fill="#8a8a8a"/><rect x="12.899999999999999" y="21" width="3.6" height="3" fill="#8a8a8a"/></svg>
<div class="t" id="k74" style="left:881.3px;top:98.81px;font-size:11.8px;color:#363636;"><span class="in">Параметры</span><i class="bm"></i></div>
<div class="t" id="k75" style="left:874px;top:113.00px;font-size:12.1px;color:#363636;"><span class="in">вычислений</span><i class="bm"></i></div>
<svg class="r" style="left:944.5px;top:116.8px" width="5" height="3" viewBox="0 0 5 3"><path d="M0 0 H5 L2.5 3 Z" fill="#666"/></svg>
<svg class="r" style="left:959px;top:68px" width="12" height="16" viewBox="0 0 12 16"><rect x="0.6" y="0.6" width="10.8" height="14.8" rx="1.3" fill="#fff" stroke="#777" stroke-width="1.1"/><rect x="2" y="2.2" width="8" height="2.5" fill="#3f72b6"/><rect x="2.3" y="6.5" width="2" height="2" fill="#777"/><rect x="5.3" y="6.5" width="2" height="2" fill="#777"/><rect x="8.3" y="6.5" width="2" height="2" fill="#777"/><rect x="2.3" y="9.5" width="2" height="2" fill="#777"/><rect x="5.3" y="9.5" width="2" height="2" fill="#777"/><rect x="8.3" y="9.5" width="2" height="2" fill="#777"/><rect x="2.3" y="12.5" width="2" height="2" fill="#777"/><rect x="5.3" y="12.5" width="2" height="2" fill="#777"/><rect x="8.3" y="12.5" width="2" height="2" fill="#777"/></svg>
<svg class="r" style="left:956px;top:99px" width="18" height="16" viewBox="0 0 18 16"><path d="M0.5 0.5 H14.5 V5 M0.5 0.5 V13.5 H8" fill="none" stroke="#888" stroke-width="1"/><path d="M0.5 4 H14.5 M0.5 8 H8 M0.5 11 H8 M4.5 0.5 V13.5 M9.5 0.5 V5" stroke="#aaa" stroke-width="0.9"/><rect x="10" y="6.5" width="7" height="9" rx="0.8" fill="#fff" stroke="#777" stroke-width="1"/><rect x="11.5" y="8" width="4" height="1.8" fill="#3f72b6"/><path d="M11.5 11.5 H15.5 M11.5 13.5 H15.5" stroke="#888" stroke-width="0.9" stroke-dasharray="1 0.8"/></svg>
<svg class="r" style="left:1005px;top:134px" width="10" height="6" viewBox="0 0 10 6"><path d="M1 5.5 L5 1.5 L9 5.5" stroke="#555" stroke-width="1.6" fill="none"/></svg>
<svg class="r" style="left:11px;top:7px" width="17" height="16" viewBox="0 0 17 16"><rect x="10.5" y="1.5" width="5.6" height="12.6" fill="#fff" stroke="#1e7145" stroke-width="1"/><rect x="12" y="3" width="2.6" height="1.2" fill="#1e7145"/><rect x="10" y="3" width="1.3" height="1.2" fill="#1e7145"/><rect x="12" y="5" width="2.6" height="1.2" fill="#1e7145"/><rect x="10" y="5" width="1.3" height="1.2" fill="#1e7145"/><rect x="12" y="7" width="2.6" height="1.2" fill="#1e7145"/><rect x="10" y="7" width="1.3" height="1.2" fill="#1e7145"/><rect x="12" y="9" width="2.6" height="1.2" fill="#1e7145"/><rect x="10" y="9" width="1.3" height="1.2" fill="#1e7145"/><rect x="12" y="11" width="2.6" height="1.2" fill="#1e7145"/><rect x="10" y="11" width="1.3" height="1.2" fill="#1e7145"/><path d="M0 1 L10 0 V15.6 L0 14.6 Z" fill="#1e7145"/><path d="M2.6 4.2 L7.4 12 M7.4 4.2 L2.6 12" stroke="#fff" stroke-width="1.9"/></svg>
<svg class="r" style="left:41px;top:8px" width="14" height="14" viewBox="0 0 14 14"><rect x="0" y="0" width="14" height="14" fill="#8052a1"/><rect x="2" y="1.4" width="10" height="5.4" fill="#fff"/><rect x="3" y="8.8" width="8" height="4.4" fill="#fff"/><rect x="5" y="11" width="2.5" height="2.2" fill="#8052a1"/></svg>
<svg class="r" style="left:66px;top:4px" width="22" height="22" viewBox="0 0 22 22"><path d="M6.5 7.7 H13.5 Q18 7.7 18 11.3 Q18 15 13 16" fill="none" stroke="#3c78c3" stroke-width="2.3"/><path d="M4 7.7 L10 3.8 L10 11.6 Z" fill="#3c78c3"/></svg>
<svg class="r" style="left:90px;top:13.2px" width="5" height="3" viewBox="0 0 5 3"><path d="M0 0 H5 L2.5 3 Z" fill="#666"/></svg>
<svg class="r" style="left:106px;top:4px" width="22" height="22" viewBox="0 0 22 22"><path d="M15.5 7.7 H8.5 Q4 7.7 4 11.3 Q4 15 9 16" fill="none" stroke="#a8a8a8" stroke-width="2.3"/><path d="M18 7.7 L12 3.8 L12 11.6 Z" fill="#a8a8a8"/></svg>
<svg class="r" style="left:130px;top:13.2px" width="5" height="3" viewBox="0 0 5 3"><path d="M0 0 H5 L2.5 3 Z" fill="#bbb"/></svg>
<div class="r" style="left:149px;top:13px;width:5px;height:1px;background:#666"></div>
<svg class="r" style="left:149px;top:15px" width="5" height="3" viewBox="0 0 5 3"><path d="M0 0 H5 L2.5 3 Z" fill="#666"/></svg>
<svg class="r" style="left:147px;top:162px" width="19" height="16" viewBox="0 0 19 16"><path d="M1.5 1 L17.5 15 M17.5 1 L1.5 15" stroke="#bdbdbd" stroke-width="2.2"/></svg>
<svg class="r" style="left:183px;top:162px" width="20" height="16" viewBox="0 0 20 16"><path d="M1.5 9 L7 14.5 L18.5 1.5" stroke="#bdbdbd" stroke-width="3" fill="none"/></svg>
<svg class="r" style="left:214px;top:158px" width="28" height="26" viewBox="0 0 28 26"><path d="M19.6 4 Q19 2.6 17.5 3 Q15.4 3.7 14.6 8.5 L12.4 18.6 Q11.5 22.3 8.4 21.4" fill="none" stroke="#555" stroke-width="2"/><circle cx="19" cy="3.6" r="1.6" fill="#555"/><circle cx="7.4" cy="20.5" r="1.7" fill="#555"/><path d="M9.2 8.3 H17.6" stroke="#555" stroke-width="1.4"/><path d="M16.4 12.4 Q18.2 11.4 19.2 13.9 L20.7 17.6 Q21.4 19.1 22.8 17.5" fill="none" stroke="#555" stroke-width="1.6"/><path d="M22.8 11.7 Q21.8 11.2 20.2 13 L17.3 17.4 Q16.4 18.9 15.3 17.8" fill="none" stroke="#555" stroke-width="1.6"/></svg>
<svg class="r" style="left:36px;top:308px" width="17" height="16" viewBox="0 0 17 16"><rect x="10.5" y="1.5" width="5.6" height="12.6" fill="#fff" stroke="#1e7145" stroke-width="1"/><rect x="12" y="3" width="2.6" height="1.2" fill="#1e7145"/><rect x="10" y="3" width="1.3" height="1.2" fill="#1e7145"/><rect x="12" y="5" width="2.6" height="1.2" fill="#1e7145"/><rect x="10" y="5" width="1.3" height="1.2" fill="#1e7145"/><rect x="12" y="7" width="2.6" height="1.2" fill="#1e7145"/><rect x="10" y="7" width="1.3" height="1.2" fill="#1e7145"/><rect x="12" y="9" width="2.6" height="1.2" fill="#1e7145"/><rect x="10" y="9" width="1.3" height="1.2" fill="#1e7145"/><rect x="12" y="11" width="2.6" height="1.2" fill="#1e7145"/><rect x="10" y="11" width="1.3" height="1.2" fill="#1e7145"/><path d="M0 1 L10 0 V15.6 L0 14.6 Z" fill="#1e7145"/><path d="M2.6 4.2 L7.4 12 M7.4 4.2 L2.6 12" stroke="#fff" stroke-width="1.9"/></svg>
<svg class="r" style="left:36px;top:378px" width="17" height="16" viewBox="0 0 17 16"><rect x="10.5" y="1.5" width="5.6" height="12.6" fill="#fff" stroke="#1e7145" stroke-width="1"/><rect x="12" y="3" width="2.6" height="1.2" fill="#1e7145"/><rect x="10" y="3" width="1.3" height="1.2" fill="#1e7145"/><rect x="12" y="5" width="2.6" height="1.2" fill="#1e7145"/><rect x="10" y="5" width="1.3" height="1.2" fill="#1e7145"/><rect x="12" y="7" width="2.6" height="1.2" fill="#1e7145"/><rect x="10" y="7" width="1.3" height="1.2" fill="#1e7145"/><rect x="12" y="9" width="2.6" height="1.2" fill="#1e7145"/><rect x="10" y="9" width="1.3" height="1.2" fill="#1e7145"/><rect x="12" y="11" width="2.6" height="1.2" fill="#1e7145"/><rect x="10" y="11" width="1.3" height="1.2" fill="#1e7145"/><path d="M0 1 L10 0 V15.6 L0 14.6 Z" fill="#1e7145"/><path d="M2.6 4.2 L7.4 12 M7.4 4.2 L2.6 12" stroke="#fff" stroke-width="1.9"/></svg>
<svg class="r" style="left:14px;top:458px" width="17" height="16" viewBox="0 0 17 16"><circle cx="8.5" cy="8" r="7.8" fill="#3f72b6"/><text x="8.5" y="12.3" text-anchor="middle" font-family="Liberation Sans" font-weight="700" font-size="12" fill="#fff">?</text></svg>
<div class="t" id="k76" style="left:488.5px;top:273.40px;font-size:15px;color:#000;letter-spacing:-0.1015625px;"><span class="in">13 ноя</span><i class="bm"></i></div>
<svg class="r" style="left:733px;top:507px" width="14" height="14" viewBox="0 0 14 14"><path d="M0.5 0.5 H12.5 V12.5 H0.5 Z M4.5 0.5 V12.5 M8.5 0.5 V12.5 M0.5 4.5 H12.5 M0.5 8.5 H12.5" stroke="#fff" stroke-width="1" fill="none"/></svg>
<svg class="r" style="left:771px;top:507px" width="14" height="14" viewBox="0 0 14 14"><rect x="0.5" y="0.5" width="13" height="12" fill="none" stroke="#fff" stroke-width="1"/><rect x="3.5" y="2.5" width="7" height="8" fill="none" stroke="#fff" stroke-width="1"/><path d="M5 4.5 H9 M5 6.5 H9 M5 8.5 H9" stroke="#fff" stroke-width="1"/></svg>
<svg class="r" style="left:809px;top:507px" width="14" height="14" viewBox="0 0 14 14"><rect x="0.5" y="0.5" width="13" height="12" fill="none" stroke="#fff" stroke-width="1"/><rect x="2" y="1" width="3" height="7" fill="#fff"/><rect x="5.5" y="1" width="3.5" height="7" fill="#f0f0f0"/><rect x="9" y="1" width="1" height="7.5" fill="#fff"/><rect x="2" y="7.6" width="8" height="1" fill="#fff"/></svg>
<div class="r" style="left:840px;top:513px;width:6px;height:2px;background:#fff"></div>
<div class="r" style="left:850px;top:513px;width:100px;height:1px;background:#fff"></div>
<div class="r" style="left:897px;top:508px;width:5px;height:12px;background:#fff"></div>
<svg class="r" style="left:954px;top:509px" width="8" height="8" viewBox="0 0 8 8"><path d="M0 4 H8 M4 0 V8" stroke="#fff" stroke-width="2"/></svg>
<svg class="r" style="left:1005px;top:168px" width="12" height="8" viewBox="0 0 12 8"><path d="M1.2 1.2 L5.6 5.8 L10 1.2" fill="none" stroke="#6a6a6a" stroke-width="2.6"/></svg>
</body></html>
